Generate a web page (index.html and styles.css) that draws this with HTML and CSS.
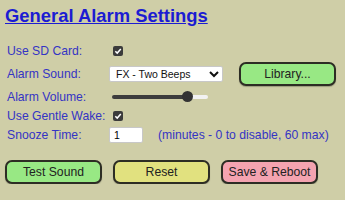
FILE: index.html
```html
<!DOCTYPE html>
<html lang="en">
<head>
    <meta charset="UTF-8">
    <meta name="viewport" content="width=device-width, initial-scale=1.0">
    <title>General Alarm Settings</title>
    <link rel="stylesheet" href="styles.css">
</head>
<body>
    <h1><a href="#">General Alarm Settings</a></h1>
    <div class="settings">
        <div class="row r1">
            <span class="label">Use SD Card:</span>
            <span class="check"><svg viewBox="0 0 10 10" width="10" height="10"><rect width="10" height="10" rx="2" fill="#3b3b3b"/><path d="M2.3 5.2 L4.2 7.1 L7.8 2.9" fill="none" stroke="#fff" stroke-width="1.5"/></svg></span>
        </div>
        <div class="row r2">
            <span class="label">Alarm Sound:</span>
            <select class="sound">
                <option>FX - Two Beeps</option>
            </select>
            <button class="btn green lib">Library...</button>
        </div>
        <div class="row r3">
            <span class="label">Alarm Volume:</span>
            <input type="range" class="volume" min="0" max="100" value="82">
        </div>
        <div class="row r4">
            <span class="label">Use Gentle Wake:</span>
            <span class="check"><svg viewBox="0 0 10 10" width="10" height="10"><rect width="10" height="10" rx="2" fill="#3b3b3b"/><path d="M2.3 5.2 L4.2 7.1 L7.8 2.9" fill="none" stroke="#fff" stroke-width="1.5"/></svg></span>
        </div>
        <div class="row r5">
            <span class="label">Snooze Time:</span>
            <input type="text" class="snooze" value="1">
            <span class="note">(minutes - 0 to disable, 60 max)</span>
        </div>
    </div>
    <div class="actions">
        <button class="btn green">Test Sound</button>
        <button class="btn yellow">Reset</button>
        <button class="btn pink">Save &amp; Reboot</button>
    </div>
</body>
</html>
```

FILE: styles.css
```css
body {
    margin: 0;
    padding: 0 0 0 5px;
    background-color: #cfcea7;
    font-family: "Liberation Sans", Arial, sans-serif;
    font-size: 12.2px;
}
h1 {
    margin: 0;
    padding-top: 5px;
    font-size: 18.4px;
    line-height: 21px;
}
h1 a {
    color: #1c1cd2;
}
.settings {
    margin-top: 14px;
    padding-left: 2px;
}
.row {
    display: flex;
    align-items: center;
}
.r1 { height: 22px; }
.r2 { height: 24px; }
.r3 { height: 21px; }
.r4 { height: 18px; }
.r5 { height: 20px; }
.label {
    width: 102px;
    color: #3434c4;
}
.check {
    display: flex;
    margin-left: 4px;
}
.sound {
    width: 114px;
    height: 16px;
    margin: 0;
    padding: 0 0 0 2px;
    font-family: "Liberation Sans", Arial, sans-serif;
    font-size: 10.5px;
    color: #111;
    background: #fff;
    border: 1px solid #c8c8c8;
    border-radius: 2px;
}
.lib {
    margin-left: 16px;
    width: 81px;
}
.volume {
    -webkit-appearance: none;
    appearance: none;
    width: 96px;
    height: 4px;
    margin: 0 0 0 3px;
    border-radius: 2px;
    background: linear-gradient(to right, #3d3d3d 0 78%, #f2f2f2 78%);
}
.volume::-webkit-slider-thumb {
    -webkit-appearance: none;
    width: 11px;
    height: 11px;
    border-radius: 50%;
    background: #333;
}
.snooze {
    width: 34px;
    height: 16px;
    box-sizing: border-box;
    margin: 0;
    padding: 0 4px;
    font-family: "Liberation Sans", Arial, sans-serif;
    font-size: 10.5px;
    background: #fff;
    border: 1px solid #c8c8c8;
    border-radius: 2px;
}
.note {
    margin-left: 15px;
    color: #3434c4;
}
.actions {
    display: flex;
    gap: 11px;
    margin-top: 15px;
}
.btn {
    width: 97px;
    height: 24px;
    padding: 0;
    font-family: "Liberation Sans", Arial, sans-serif;
    font-size: 12.2px;
    color: #222;
    border: 2px solid #2d2d24;
    border-radius: 7px;
    box-shadow: 0 1px 1px rgba(0,0,0,0.25);
}
.green {
    background-color: #98e884;
}
.yellow {
    background-color: #e1e17f;
}
.pink {
    background-color: #f4a3b0;
}
```
